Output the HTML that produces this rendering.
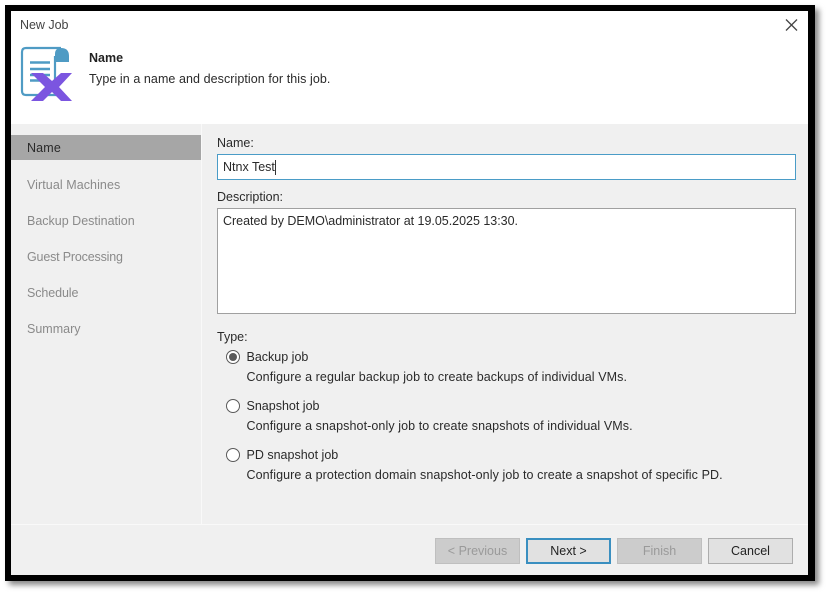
<!DOCTYPE html>
<html><head><meta charset="utf-8">
<style>
html,body{margin:0;padding:0;background:#fff;}
body{width:828px;height:594px;position:relative;overflow:hidden;font-family:"Liberation Sans",sans-serif;font-size:12.5px;color:#2a2a2a;}
.a{position:absolute;white-space:nowrap;line-height:16px;filter:blur(.35px);}
.box{position:absolute;box-sizing:border-box;}
.nav{color:#8a8a8a;left:27px;}
.btn{position:absolute;top:538px;height:26px;width:85px;box-sizing:border-box;text-align:center;line-height:24px;background:#e1e1e1;border:1px solid #adadad;color:#222;}
.btn span{filter:blur(.35px);display:inline-block;}
.dis{background:#cccccc;border-color:#bfbfbf;color:#9a9a9a;}
.radio{position:absolute;left:226px;width:14px;height:14px;box-sizing:border-box;border:1px solid #5a5a5a;border-radius:50%;background:#fff;filter:blur(.3px);}
</style></head><body>
<div class="box" style="left:9px;top:9px;width:810px;height:576px;background:#888;filter:blur(3px);"></div>
<div class="box" style="left:5px;top:5px;width:810px;height:576px;background:#000;"></div>
<div class="box" style="left:11px;top:11px;width:797px;height:564px;background:#fff;overflow:hidden;"></div>
<div class="box" style="left:11px;top:124px;width:797px;height:451px;background:#f0f0f0;"></div>
<div class="box" style="left:201px;top:124px;width:1px;height:401px;background:#f9f9f9;"></div>
<div class="box" style="left:11px;top:524px;width:797px;height:1px;background:#f9f9f9;"></div>

<div class="a" style="left:20px;top:17px;color:#444;letter-spacing:-.03px;">New Job</div>
<svg class="box" style="left:783px;top:17px;filter:blur(.3px);" width="16" height="16" viewBox="0 0 16 16"><path d="M3 2.5L14 13.5M14 2.5L3 13.5" stroke="#444" stroke-width="1.3" fill="none"/></svg>

<svg class="box" style="left:14px;top:42px;filter:blur(.35px);" width="66" height="66" viewBox="0 0 66 66">
<path d="M47 6H12Q8 6 8 10V49Q8 53 12 53H41V14" fill="#fff" stroke="#4f9bc4" stroke-width="2.2"/>
<path d="M41 20V12Q41 6 47 6Q55 6 55 14V20Z" fill="#4f9bc4"/>
<path d="M16 20.5H36M16 27H36M16 33H36M16 38.5H31" stroke="#4f9bc4" stroke-width="2.4" fill="none"/>
<path d="M17 31H29L38 39L47 31H58L45 45L58 59H47L38 50L29 59H17L31 45Z" fill="#7b55e0"/>
</svg>

<div class="a" style="left:89px;top:50px;font-weight:bold;color:#222;">Name</div>
<div class="a" style="left:89px;top:71px;letter-spacing:.07px;">Type in a name and description for this job.</div>

<div class="box" style="left:11px;top:135px;width:190px;height:25px;background:#a6a6a6;"></div>
<div class="a" style="left:27px;top:140px;letter-spacing:.15px;">Name</div>
<div class="a nav" style="top:177px;letter-spacing:.07px;">Virtual Machines</div>
<div class="a nav" style="top:213px;">Backup Destination</div>
<div class="a nav" style="top:249px;letter-spacing:-.18px;">Guest Processing</div>
<div class="a nav" style="top:285px;letter-spacing:-.1px;">Schedule</div>
<div class="a nav" style="top:321px;">Summary</div>

<div class="a" style="left:217px;top:135px;">Name:</div>
<div class="box" style="left:217px;top:154px;width:579px;height:26px;background:#fff;border:1px solid #4a9cc7;"></div>
<div class="a" style="left:223px;top:159px;">Ntnx Test</div>
<div class="box" style="left:275px;top:160px;width:1px;height:15px;background:#333;"></div>

<div class="a" style="left:217px;top:189px;">Description:</div>
<div class="box" style="left:217px;top:208px;width:579px;height:106px;background:#fff;border:1px solid #a0a0a0;"></div>
<div class="a" style="left:223px;top:213px;letter-spacing:-.02px;">Created by DEMO\administrator at 19.05.2025 13:30.</div>

<div class="a" style="left:217px;top:329px;">Type:</div>
<div class="radio" style="top:350px;"></div>
<div class="box" style="left:229px;top:353px;width:8px;height:8px;border-radius:50%;background:#5a5a5a;filter:blur(.3px);"></div>
<div class="a" style="left:246.5px;top:349px;">Backup job</div>
<div class="a" style="left:246.5px;top:369px;letter-spacing:.09px;">Configure a regular backup job to create backups of individual VMs.</div>
<div class="radio" style="top:399px;"></div>
<div class="a" style="left:246.5px;top:398px;">Snapshot job</div>
<div class="a" style="left:246.5px;top:418px;letter-spacing:.09px;">Configure a snapshot-only job to create snapshots of individual VMs.</div>
<div class="radio" style="top:448px;"></div>
<div class="a" style="left:246.5px;top:447px;">PD snapshot job</div>
<div class="a" style="left:246.5px;top:467px;letter-spacing:.085px;">Configure a protection domain snapshot-only job to create a snapshot of specific PD.</div>

<div class="btn dis" style="left:435px;"><span>&lt; Previous</span></div>
<div class="btn" style="left:526px;border:2px solid #3a8fc0;line-height:22px;"><span>Next &gt;</span></div>
<div class="btn dis" style="left:617px;"><span>Finish</span></div>
<div class="btn" style="left:708px;"><span>Cancel</span></div>
</body></html>
